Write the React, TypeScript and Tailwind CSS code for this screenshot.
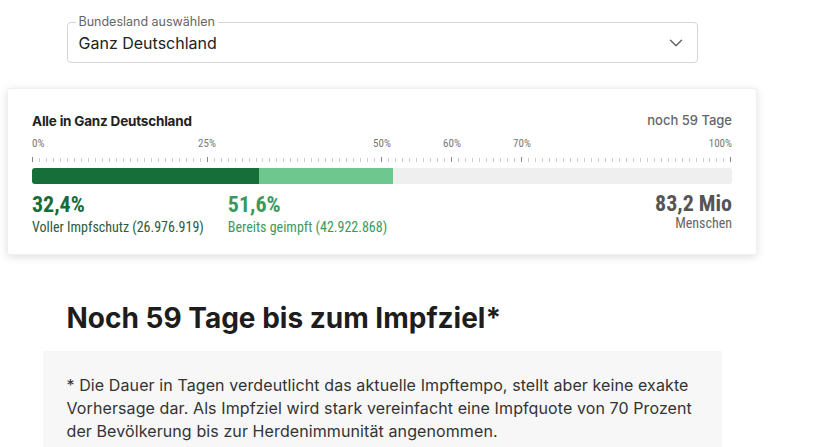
import { ChevronDown } from 'lucide-react';

const ticks = Array.from({ length: 101 }, (_, i) => i);
const majors = [0, 25, 50, 60, 70, 100];

const condensed = { fontFamily: '"Roboto Condensed", "Liberation Sans Narrow", "DejaVu Sans Condensed", Roboto, sans-serif' };

export default function App() {
  return (
    <div className="w-[764px] flex flex-col items-center bg-white font-['Inter',sans-serif] text-[#222]">
      {/* Bundesland select */}
      <div className="relative mt-[22px] w-[631px] h-[41px] border border-[#d6d6d6] rounded-[4px] pl-[11px] pr-[10px] flex items-center justify-between">
        <span className="absolute -top-[8px] left-[8px] bg-white px-[3px] text-[12.5px] leading-[14px] text-[#666]">
          Bundesland auswählen
        </span>
        <span className="text-[16px] text-[#222]">Ganz Deutschland</span>
        <ChevronDown className="w-[22px] h-[22px] text-[#666]" strokeWidth={1.6} />
      </div>

      {/* Fortschritt card */}
      <div className="mt-[25px] w-[750px] rounded-[3px] bg-white shadow-[0_2px_8px_rgba(0,0,0,0.13)] border border-[#f0f0f0] px-[24px] pt-[23px] pb-[17px]">
        <div className="flex items-center justify-between h-[18px]">
          <span className="text-[13.5px] font-bold text-[#222] tracking-[-0.2px]">Alle in Ganz Deutschland</span>
          <span className="text-[13px] font-medium text-[#666]">noch 59 Tage</span>
        </div>

        <div className="relative h-[16px] mt-[6px] text-[11px] text-[#777]" style={condensed}>
          {majors.map((m) => (
            <span
              key={m}
              className="absolute top-0 leading-[16px]"
              style={{
                left: `${m}%`,
                transform: m === 0 ? 'none' : m === 100 ? 'translateX(-100%)' : 'translateX(-50%)',
              }}
            >
              {m}%
            </span>
          ))}
        </div>

        <div className="flex justify-between items-end h-[5px] mt-[5px]">
          {ticks.map((t) => (
            <span
              key={t}
              className={majors.includes(t) ? 'w-px h-[5px] bg-[#888]' : 'w-px h-[4px] bg-[#ccc]'}
            />
          ))}
        </div>

        <div className="mt-[6px] h-[16px] rounded-[3px] bg-[#efefef] flex overflow-hidden">
          <div className="h-full bg-[#166f38]" style={{ width: '32.4%' }} />
          <div className="h-full bg-[#6ec78e]" style={{ width: '19.2%' }} />
        </div>

        <div className="mt-[9px] flex items-start" style={condensed}>
          <div className="flex flex-col">
            <span className="text-[22px] font-bold leading-[24px] text-[#176c3a]">32,4%</span>
            <span className="text-[14px] leading-[20px] text-[#2e5a3d]">Voller Impfschutz (26.976.919)</span>
          </div>
          <div className="flex flex-col ml-[24px]">
            <span className="text-[22px] font-bold leading-[24px] text-[#3a9a5c]">51,6%</span>
            <span className="text-[14px] leading-[20px] text-[#3a9a5c]">Bereits geimpft (42.922.868)</span>
          </div>
          <div className="flex flex-col items-end ml-auto">
            <span className="text-[22px] font-bold leading-[22px] text-[#555]">83,2 Mio</span>
            <span className="text-[14px] leading-[16px] text-[#666]">Menschen</span>
          </div>
        </div>
      </div>

      {/* Impfziel */}
      <div className="w-[679px] mt-[46px]">
        <h2 className="px-[24px] text-[28px] font-bold leading-[34px] text-[#1d1d1d]">
          Noch 59 Tage bis zum Impfziel*
        </h2>
        <div className="mt-[16px] bg-[#f7f7f7] px-[24px] pt-[23px] pb-[24px]">
          <p className="text-[16px] leading-[23px] text-[#333] tracking-[0.1px]">
            * Die Dauer in Tagen verdeutlicht das aktuelle Impftempo, stellt aber keine exakte Vorhersage dar. Als
            Impfziel wird stark vereinfacht eine Impfquote von 70 Prozent der Bevölkerung bis zur Herdenimmunität
            angenommen.
          </p>
        </div>
      </div>
    </div>
  );
}
